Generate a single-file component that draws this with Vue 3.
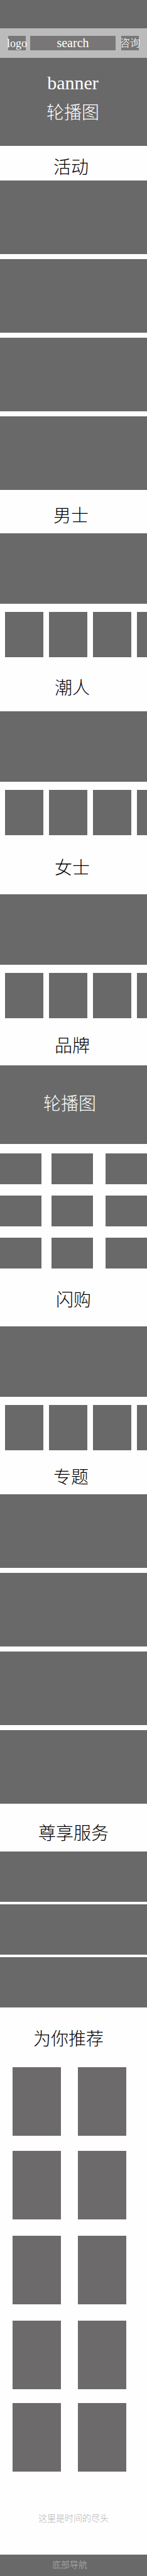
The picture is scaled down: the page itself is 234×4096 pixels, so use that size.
<script setup>
const productRows = [
  { id: 'men', title: '男士' },
  { id: 'trend', title: '潮人' },
  { id: 'women', title: '女士' },
]
</script>

<template>
  <div class="page">
    <header class="hero">
      <div class="topbar">
        <a class="chip" href="#">logo</a>
        <input class="search" type="text" placeholder="search" aria-label="search" />
        <button class="chip consult" type="button">咨询</button>
      </div>
      <div class="hero-text">
        <p class="latin">banner</p>
        <p>轮播图</p>
      </div>
    </header>

    <main>
      <section class="activity">
        <h2>活动</h2>
        <div class="bars">
          <div v-for="n in 4" :key="n" class="bar"></div>
        </div>
      </section>

      <section v-for="row in productRows" :key="row.id" :class="row.id">
        <h2>{{ row.title }}</h2>
        <div class="cover"></div>
        <div class="thumbs">
          <div v-for="n in 4" :key="n" class="thumb"></div>
        </div>
      </section>

      <section class="brand">
        <h2>品牌</h2>
        <div class="carousel">轮播图</div>
        <div class="brands">
          <div v-for="n in 9" :key="n" class="brand-tile"></div>
        </div>
      </section>

      <section class="flash">
        <h2>闪购</h2>
        <div class="cover"></div>
        <div class="thumbs">
          <div v-for="n in 4" :key="n" class="thumb"></div>
        </div>
      </section>

      <section class="topic">
        <h2>专题</h2>
        <div class="bars">
          <div v-for="n in 4" :key="n" class="bar"></div>
        </div>
      </section>

      <section class="service">
        <h2>尊享服务</h2>
        <div class="strips">
          <div v-for="n in 3" :key="n" class="strip"></div>
        </div>
      </section>

      <section class="recommend">
        <h2>为你推荐</h2>
        <div class="cards">
          <div v-for="n in 10" :key="n" class="card"></div>
        </div>
      </section>

      <p class="end">这里是时间的尽头</p>
    </main>

    <nav class="bottom-nav">底部导航</nav>
  </div>
</template>

<style>
body {
  margin: 0;
  background: #fefefe;
}
</style>

<style scoped>
.page {
  font-family: "Liberation Serif", "Noto Sans CJK SC", serif;
  font-weight: 300;
  color: #000;
  overflow: hidden;
}

p,
h2 {
  margin: 0;
}

.hero {
  background: #696969;
  padding-top: 45px;
}

.topbar {
  display: flex;
  align-items: center;
  padding: 12px 13px;
  background: #bbb;
}

.chip {
  display: flex;
  flex: none;
  align-items: center;
  justify-content: center;
  width: 28px;
  height: 23px;
  padding: 0;
  border: 0;
  background: #787677;
  color: #fff;
  font: inherit;
  font-size: 18px;
  line-height: 22px;
  white-space: nowrap;
  text-decoration: none;
}

.consult {
  font-size: 16px;
}

.search {
  flex: 1;
  min-width: 0;
  height: 23px;
  margin: 0 9px 0 7px;
  padding: 0;
  border: 0;
  border-radius: 0;
  appearance: none;
  background: #787677;
  color: #fff;
  font: inherit;
  font-size: 20px;
  line-height: 22px;
  text-align: center;
}

.search::placeholder {
  color: #fff;
  opacity: 1;
}

.hero-text {
  display: grid;
  gap: 12px;
  padding: 22px 2px 34px 0;
  color: #fff;
  font-size: 28px;
  line-height: 36px;
  text-align: center;
}

.hero-text .latin {
  font-size: 30px;
}

h2 {
  font-size: 28px;
  font-weight: 300;
  line-height: 36px;
  text-align: center;
}

.activity h2 {
  padding: 17px 8px 2px 0;
}

.men h2 {
  padding: 24px 8px 9px 0;
}

.trend h2 {
  padding: 32px 4px 18px 0;
}

.women h2 {
  padding: 35px 4px 23px 0;
}

.brand h2 {
  padding: 27px 4px 12px 0;
}

.flash h2 {
  padding: 33px 0 23px;
}

.topic h2 {
  padding: 26px 8px 8px 0;
}

.service h2 {
  padding: 30px 0 10px;
}

.recommend h2 {
  padding: 33px 16px 26px 0;
}

.bars {
  display: grid;
  gap: 8px;
}

.bar {
  aspect-ratio: 2 / 1;
  background: #696969;
}

.cover {
  height: 112px;
  background: #696969;
}

.thumbs {
  display: flex;
  gap: 9px;
  padding: 13px 0 0 8px;
}

.thumb {
  flex: none;
  width: 61px;
  height: 72px;
  background: #696969;
}

.carousel {
  padding: 42px 12px 43px 0;
  background: #696969;
  color: #fff;
  font-size: 28px;
  line-height: 40px;
  text-align: center;
}

.brands {
  display: grid;
  grid-template-columns: 82fr 86fr 66fr;
  row-gap: 18px;
  padding-top: 15px;
}

.brand-tile {
  width: 66px;
  height: 49px;
  background: #696969;
}

.strips {
  display: grid;
  gap: 4px;
}

.strip {
  height: 80px;
  background: #696969;
}

.cards {
  display: grid;
  grid-template-columns: 1fr 1fr;
  grid-template-rows: 133px 135px 135px 131px 110px;
  column-gap: 27px;
  padding: 0 33px 0 20px;
}

.card {
  height: 109px;
  background: #6c6a6b;
}

.end {
  padding: 64px 0 47px;
  color: #b4b4b4;
  font-size: 14px;
  line-height: 20px;
  text-align: center;
}

.bottom-nav {
  padding: 7px 12px 7px 0;
  background: #696969;
  color: #b4b4b4;
  font-size: 14px;
  line-height: 20px;
  text-align: center;
}
</style>
